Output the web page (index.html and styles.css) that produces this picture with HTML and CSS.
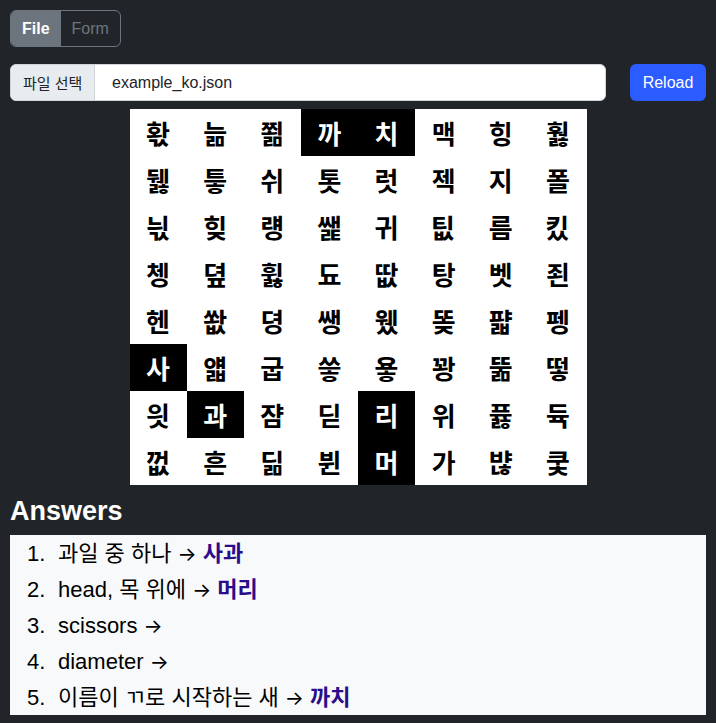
FILE: index.html
```html
<!DOCTYPE html>
<html lang="ko">
<head>
<meta charset="utf-8">
<title>Word Search</title>
<link rel="stylesheet" href="styles.css">
</head>
<body>
<div class="page">
  <div class="tabs">
    <button class="tab active">File</button>
    <button class="tab">Form</button>
  </div>
  <div class="file-row">
    <div class="file-input">
      <span class="file-label">파일 선택</span>
      <span class="file-name">example_ko.json</span>
    </div>
    <button class="reload">Reload</button>
  </div>
  <div class="grid-wrap">
    <div class="grid">
      <div class="cell">홗</div><div class="cell">늚</div><div class="cell">쬚</div><div class="cell hit">까</div><div class="cell hit">치</div><div class="cell">맥</div><div class="cell">힝</div><div class="cell">훯</div>
      <div class="cell">뒗</div><div class="cell">틓</div><div class="cell">쉬</div><div class="cell">톳</div><div class="cell">럿</div><div class="cell">젝</div><div class="cell">지</div><div class="cell">폴</div>
      <div class="cell">늯</div><div class="cell">힞</div><div class="cell">럥</div><div class="cell">쌡</div><div class="cell">귀</div><div class="cell">팂</div><div class="cell">름</div><div class="cell">킸</div>
      <div class="cell">쳉</div><div class="cell">뎦</div><div class="cell">휧</div><div class="cell">됴</div><div class="cell">땂</div><div class="cell">탕</div><div class="cell">벳</div><div class="cell">죈</div>
      <div class="cell">헨</div><div class="cell">쐆</div><div class="cell">뎡</div><div class="cell">쌩</div><div class="cell">웼</div><div class="cell">똦</div><div class="cell">퍏</div><div class="cell">펭</div>
      <div class="cell hit">사</div><div class="cell">얣</div><div class="cell">굽</div><div class="cell">씋</div><div class="cell">욯</div><div class="cell">꽝</div><div class="cell">뚦</div><div class="cell">떻</div>
      <div class="cell">읫</div><div class="cell hit">과</div><div class="cell">쟘</div><div class="cell">딛</div><div class="cell hit">리</div><div class="cell">위</div><div class="cell">퓷</div><div class="cell">듁</div>
      <div class="cell">껎</div><div class="cell">흔</div><div class="cell">딞</div><div class="cell">뷘</div><div class="cell hit">머</div><div class="cell">가</div><div class="cell">뱒</div><div class="cell">쿷</div>
    </div>
  </div>
  <h4 class="answers-title">Answers</h4>
  <ol class="answers">
    <li><span class="q">과일 중 하나 <span class="arrow">→</span> <strong class="ans">사과</strong></span></li>
    <li><span class="q">head, 목 위에 <span class="arrow">→</span> <strong class="ans">머리</strong></span></li>
    <li><span class="q">scissors <span class="arrow">→</span></span></li>
    <li><span class="q">diameter <span class="arrow">→</span></span></li>
    <li><span class="q">이름이 ㄲ로 시작하는 새 <span class="arrow">→</span> <strong class="ans">까치</strong></span></li>
  </ol>
</div>
</body>
</html>
```
FILE: styles.css
```css
body{
  margin:0;
  background:#212529;
  font-family:"Liberation Sans","Noto Sans CJK KR",sans-serif;
  color:#fff;
}
.page{
  padding:10px;
}
.tabs{
  display:inline-flex;
  border:1px solid #6c757d;
  border-radius:6px;
  overflow:hidden;
  height:37px;
  box-sizing:border-box;
}
.tab{
  border:0;
  margin:0;
  background:transparent;
  color:#6c757d;
  font-family:inherit;
  font-size:16px;
  padding:0 11px;
  height:100%;
}
.tab.active{
  background:#6c757d;
  color:#fff;
  font-weight:bold;
}
.file-row{
  display:flex;
  align-items:stretch;
  gap:24px;
  margin-top:17px;
  height:37px;
}
.file-input{
  flex:1;
  display:flex;
  align-items:stretch;
  background:#fff;
  border:1px solid #ced4da;
  border-radius:6px;
  overflow:hidden;
  box-sizing:border-box;
}
.file-label{
  display:flex;
  align-items:center;
  padding:0 0 0 12px;
  width:84px;
  box-sizing:border-box;
  background:#e9ecef;
  border-right:1px solid #ced4da;
  color:#212529;
  font-size:15px;
}
.file-name{
  display:flex;
  align-items:center;
  padding-left:17px;
  color:#212529;
  font-size:16px;
}
.reload{
  width:76px;
  border:0;
  border-radius:6px;
  background:#2b5cff;
  color:#fff;
  font-family:inherit;
  font-size:16px;
  font-weight:500;
}
.grid-wrap{
  display:flex;
  justify-content:center;
  margin-top:8px;
}
.grid{
  display:grid;
  grid-template-columns:repeat(8,57.125px);
  grid-auto-rows:47px;
  background:#fff;
}
.cell{
  display:flex;
  align-items:center;
  justify-content:center;
  color:#000;
  font-family:"Noto Sans CJK KR",sans-serif;
  font-weight:bold;
  font-size:26px;
}
.cell.hit{
  background:#000;
  color:#fff;
}
.answers-title{
  margin:11px 0 9px;
  font-size:27px;
  line-height:30px;
  font-weight:bold;
}
.answers{
  margin:0;
  padding:0 0 0 17px;
  background:#f8f9fa;
  list-style:none;
  counter-reset:item;
  color:#000;
  font-size:22px;
}
.answers li{
  counter-increment:item;
  display:flex;
  align-items:center;
  height:36px;
  padding-top:2px;
  box-sizing:border-box;
}
.answers li::before{
  content:counter(item) ".";
  width:31px;
  flex:none;
}
.q{
  line-height:1.2;
}
.arrow{
  font-family:"Inter",sans-serif;
  font-size:20px;
}
.ans{
  color:#2b0d8a;
  font-weight:bold;
}
```
